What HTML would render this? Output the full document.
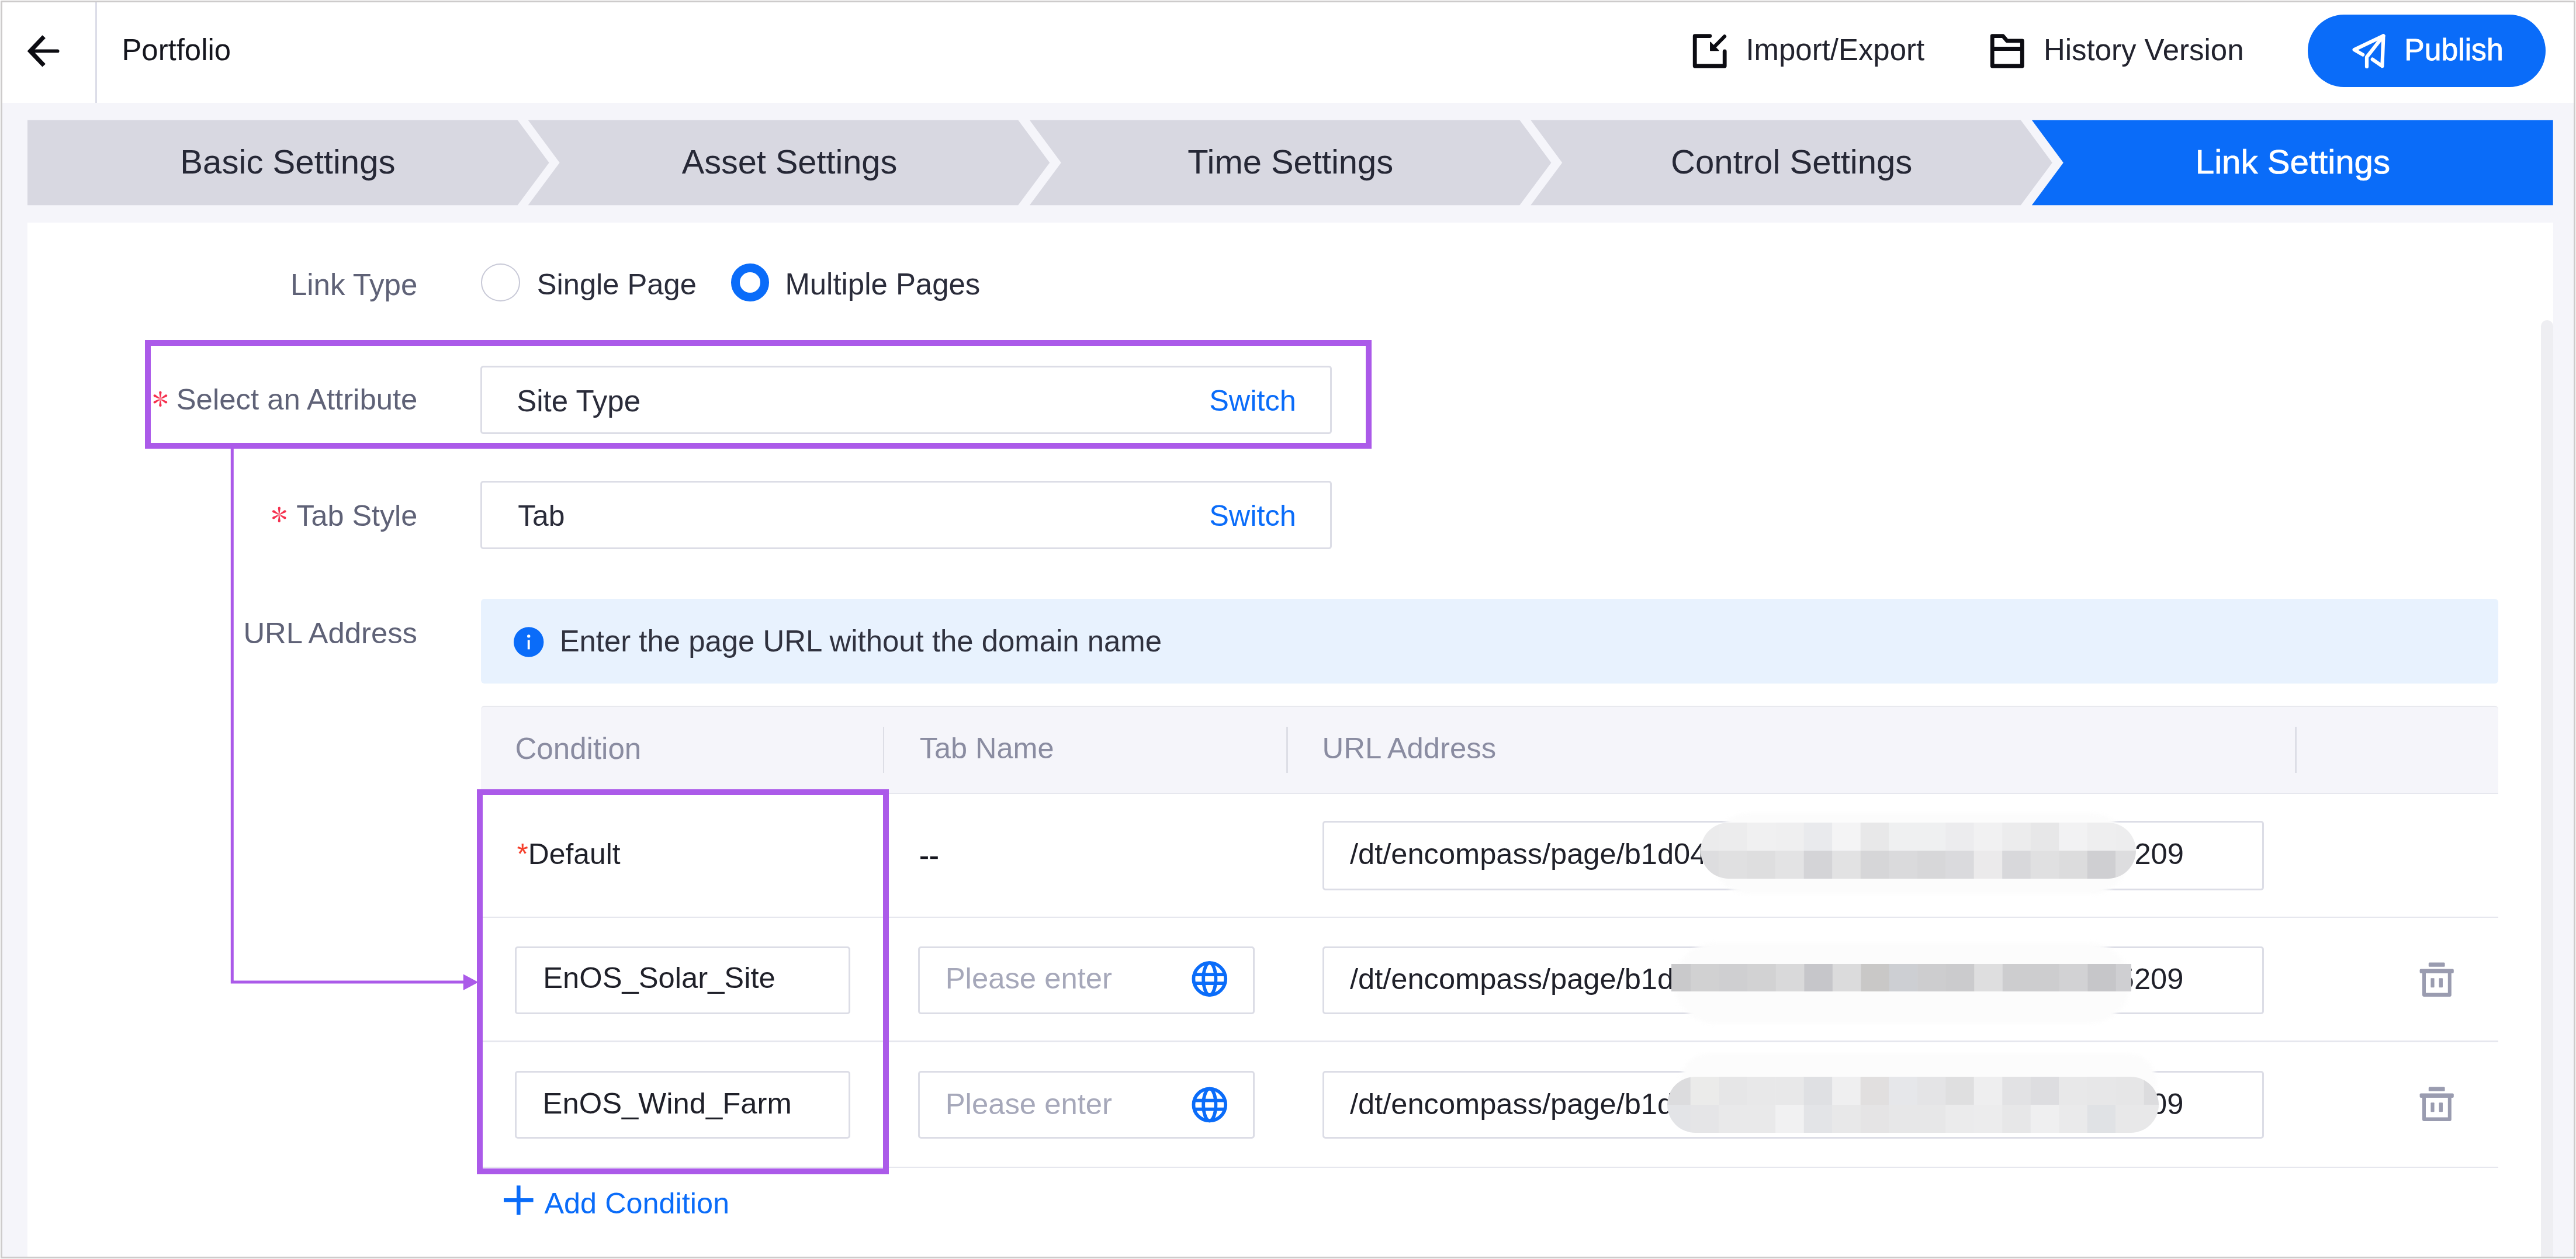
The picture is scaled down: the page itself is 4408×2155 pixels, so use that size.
<!DOCTYPE html>
<html><head><meta charset="utf-8"><title>Link Settings</title>
<style>
html,body{margin:0;padding:0;background:#fff;}
body{width:4408px;height:2155px;position:relative;overflow:hidden;font-family:"Liberation Sans",sans-serif;}
.t{position:absolute;white-space:nowrap;line-height:1;}
.b{position:absolute;box-sizing:border-box;}
.s{position:absolute;left:0;top:0;overflow:visible;pointer-events:none;}
</style></head><body>
<div class="b" style="left:4.00px;top:4.00px;width:4400.00px;height:2147.00px;background:#f5f5fa"></div>
<div class="b" style="left:4.00px;top:4.00px;width:4400.00px;height:172.40px;background:#fff"></div>
<div class="b" style="left:163.20px;top:4.00px;width:2.60px;height:172.40px;background:#dcdde8"></div>
<div class="b" style="left:47.00px;top:380.60px;width:4321.70px;height:1770.40px;background:#fff"></div>
<div class="b" style="left:4347.70px;top:548.00px;width:21.00px;height:1603.00px;background:#eeeef2;border-radius:10.5px 10.5px 0 0"></div>
<svg class="s" width="4408" height="2155" viewBox="0 0 4408 2155" ><g fill="none" stroke="#0c0c12" stroke-width="7.4"><path d="M75.2 62.8 L51.8 87.4 L75.2 112" stroke-linejoin="miter"/><path d="M51.8 87.4 H98.6" stroke-width="5.8" stroke-linecap="round"/></g></svg>
<div class="t" style="left:208.43px;top:60.93px;font-size:50.88px;color:#15161e;">Portfolio</div>
<svg class="s" width="4408" height="2155" viewBox="0 0 4408 2155" ><g fill="none" stroke="#0c0c12" stroke-width="6.8" stroke-linecap="round" stroke-linejoin="round"><path d="M2925.8 61.6 H2900.2 V113 H2951.2 V88"/><path d="M2951 62.4 L2934 79.6" stroke-width="6.2"/></g><path d="M2926.8 72.2 V86.6 H2940.8 Z" fill="#0c0c12" stroke="#0c0c12" stroke-width="1.5" stroke-linejoin="round"/></svg>
<div class="t" style="left:2987.42px;top:61.08px;font-size:50.94px;color:#22232e;">Import/Export</div>
<svg class="s" width="4408" height="2155" viewBox="0 0 4408 2155" ><g fill="none" stroke="#0c0c12" stroke-width="6.8" stroke-linejoin="round"><path d="M3409.2 61.6 H3427.4 L3434.4 69.9 H3460.3 V113 H3409.2 Z"/><path d="M3409.2 83.5 H3460.3"/></g></svg>
<div class="t" style="left:3496.92px;top:61.06px;font-size:50.96px;color:#22232e;">History Version</div>
<div class="b" style="left:3948.70px;top:25.20px;width:407.00px;height:123.70px;background:#0a6cf9;border-radius:62.1px"></div>
<svg class="s" width="4408" height="2155" viewBox="0 0 4408 2155" ><g fill="none" stroke="#fff" stroke-width="6.2" stroke-linecap="round" stroke-linejoin="round"><path d="M4043.2 93.6 L4028.6 85.1 L4078.4 61.4 L4076.4 113.2 L4059.8 101.6"/><path d="M4078.4 61.4 L4050 97.6 V114"/></g></svg>
<div class="t" style="left:4114.37px;top:60.31px;font-size:51.61px;color:#fff;-webkit-text-stroke:0.9px #fff;">Publish</div>
<svg class="s" width="4408" height="2155" viewBox="0 0 4408 2155" ><polygon points="47.0,205.6 885.6,205.6 939.6,278.4 885.6,351.3 47.0,351.3" fill="#d8d8e1"/><polygon points="903.6,205.6 1742.2,205.6 1796.2,278.4 1742.2,351.3 903.6,351.3 957.6,278.4" fill="#d8d8e1"/><polygon points="1761.8,205.6 2600.4,205.6 2654.4,278.4 2600.4,351.3 1761.8,351.3 1815.8,278.4" fill="#d8d8e1"/><polygon points="2619.2,205.6 3457.8,205.6 3511.8,278.4 3457.8,351.3 2619.2,351.3 2673.2,278.4" fill="#d8d8e1"/><polygon points="3476.8,205.6 4368.7,205.6 4368.7,351.3 3476.8,351.3 3530.8,278.4" fill="#0a6cf9"/></svg>
<div class="t" style="left:308.35px;top:248.41px;font-size:58.11px;color:#262836;">Basic Settings</div>
<div class="t" style="left:1166.70px;top:248.78px;font-size:57.67px;color:#262836;">Asset Settings</div>
<div class="t" style="left:2032.34px;top:248.58px;font-size:57.91px;color:#262836;">Time Settings</div>
<div class="t" style="left:2859.10px;top:248.43px;font-size:58.08px;color:#262836;">Control Settings</div>
<div class="t" style="left:3756.84px;top:248.34px;font-size:58.19px;color:#fff;-webkit-text-stroke:0.7px #fff;">Link Settings</div>
<div class="t" style="left:496.92px;top:462.01px;font-size:51.02px;color:#5f6277;">Link Type</div>
<div class="t" style="left:301.71px;top:658.96px;font-size:50.85px;color:#5f6277;">Select an Attribute</div>
<svg class="s" width="4408" height="2155" viewBox="0 0 4408 2155" ><g fill="#f5304e"><polygon points="275.30,679.90 276.50,671.70 272.30,671.70 273.50,679.90"/><circle cx="274.40" cy="671.70" r="2.1"/><polygon points="277.45,682.18 285.15,679.12 283.05,675.48 276.55,680.62"/><circle cx="284.10" cy="677.30" r="2.1"/><polygon points="276.55,685.18 283.05,690.32 285.15,686.68 277.45,683.62"/><circle cx="284.10" cy="688.50" r="2.1"/><polygon points="273.50,685.90 272.30,694.10 276.50,694.10 275.30,685.90"/><circle cx="274.40" cy="694.10" r="2.1"/><polygon points="271.35,683.62 263.65,686.68 265.75,690.32 272.25,685.18"/><circle cx="264.70" cy="688.50" r="2.1"/><polygon points="272.25,680.62 265.75,675.48 263.65,679.12 271.35,682.18"/><circle cx="264.70" cy="677.30" r="2.1"/></g><circle cx="274.4" cy="682.9" r="3.2" fill="#f8889a"/></svg>
<div class="t" style="left:507.29px;top:858.18px;font-size:50.34px;color:#5f6277;">Tab Style</div>
<svg class="s" width="4408" height="2155" viewBox="0 0 4408 2155" ><g fill="#f5304e"><polygon points="478.70,877.90 479.90,869.70 475.70,869.70 476.90,877.90"/><circle cx="477.80" cy="869.70" r="2.1"/><polygon points="480.85,880.18 488.55,877.12 486.45,873.48 479.95,878.62"/><circle cx="487.50" cy="875.30" r="2.1"/><polygon points="479.95,883.18 486.45,888.32 488.55,884.68 480.85,881.62"/><circle cx="487.50" cy="886.50" r="2.1"/><polygon points="476.90,883.90 475.70,892.10 479.90,892.10 478.70,883.90"/><circle cx="477.80" cy="892.10" r="2.1"/><polygon points="474.75,881.62 467.05,884.68 469.15,888.32 475.65,883.18"/><circle cx="468.10" cy="886.50" r="2.1"/><polygon points="475.65,878.62 469.15,873.48 467.05,877.12 474.75,880.18"/><circle cx="468.10" cy="875.30" r="2.1"/></g><circle cx="477.8" cy="880.9" r="3.2" fill="#f8889a"/></svg>
<div class="t" style="left:416.39px;top:1059.16px;font-size:50.85px;color:#5f6277;">URL Address</div>
<div class="b" style="left:822.50px;top:451.10px;width:67.50px;height:64.60px;border:2.8px solid #c8c9d7;border-radius:50%;background:#fff"></div>
<div class="t" style="left:918.72px;top:462.12px;font-size:50.65px;color:#2a2c3a;">Single Page</div>
<div class="b" style="left:1250.90px;top:451.10px;width:64.70px;height:64.70px;border:15.7px solid #0a6cf9;border-radius:50%;background:#fff"></div>
<div class="t" style="left:1343.43px;top:461.91px;font-size:50.90px;color:#2a2c3a;">Multiple Pages</div>
<div class="b" style="left:822.40px;top:626.20px;width:1456.40px;height:117.30px;border:3.1px solid #dcdde6;border-radius:5px;background:#fff"></div>
<div class="t" style="left:884.20px;top:660.99px;font-size:51.05px;color:#2a2c3a;">Site Type</div>
<div class="t" style="left:2069.23px;top:660.90px;font-size:50.44px;color:#0a6cf9;">Switch</div>
<div class="b" style="left:822.40px;top:823.30px;width:1456.40px;height:116.80px;border:3.1px solid #dcdde6;border-radius:5px;background:#fff"></div>
<div class="t" style="left:886.20px;top:859.12px;font-size:49.83px;color:#2a2c3a;">Tab</div>
<div class="t" style="left:2069.23px;top:858.30px;font-size:50.44px;color:#0a6cf9;">Switch</div>
<div class="b" style="left:823.00px;top:1025.00px;width:3451.60px;height:145.20px;background:#e8f2fe;border-radius:6px"></div>
<svg class="s" width="4408" height="2155" viewBox="0 0 4408 2155" ><circle cx="904.7" cy="1099" r="25.7" fill="#0a6cf9"/><circle cx="904.7" cy="1088.9" r="2.7" fill="#fff"/><rect x="902.8" y="1095.6" width="3.8" height="15.8" fill="#fff"/></svg>
<div class="t" style="left:957.63px;top:1072.53px;font-size:50.88px;color:#30323f;">Enter the page URL without the domain name</div>
<div class="b" style="left:823.00px;top:1208.20px;width:3451.80px;height:148.80px;background:#f5f5fa;border-radius:6px 6px 0 0;border-top:2.8px solid #e8e9ee"></div>
<div class="b" style="left:823.00px;top:1356.80px;width:3451.80px;height:2.60px;background:#e6e7ee"></div>
<div class="b" style="left:823.00px;top:1568.80px;width:3451.80px;height:2.60px;background:#e6e7ee"></div>
<div class="b" style="left:823.00px;top:1781.20px;width:3451.80px;height:2.60px;background:#e6e7ee"></div>
<div class="b" style="left:823.00px;top:1996.80px;width:3451.80px;height:2.60px;background:#e6e7ee"></div>
<div class="b" style="left:1510.60px;top:1243.50px;width:2.60px;height:79.50px;background:#dddee6"></div>
<div class="b" style="left:2201.20px;top:1243.50px;width:2.60px;height:79.50px;background:#dddee6"></div>
<div class="b" style="left:3927.40px;top:1243.50px;width:2.60px;height:79.50px;background:#dddee6"></div>
<div class="t" style="left:881.45px;top:1255.75px;font-size:51.09px;color:#8a8ca1;">Condition</div>
<div class="t" style="left:1573.79px;top:1256.32px;font-size:50.42px;color:#8a8ca1;">Tab Name</div>
<div class="t" style="left:2262.49px;top:1255.96px;font-size:50.85px;color:#8a8ca1;">URL Address</div>
<div class="t" style="left:884.45px;top:1438.04px;font-size:49.80px;color:#1f2029;"><span style="color:#f5402c">*</span>Default</div>
<div class="t" style="left:1572.98px;top:1438.97px;font-size:50.60px;color:#15161e;-webkit-text-stroke:0.7px #15161e;">--</div>
<div class="b" style="left:2263.40px;top:1405.10px;width:1610.40px;height:118.80px;border:3.1px solid #dcdde6;border-radius:5px;background:#fff"></div>
<div class="b" style="left:2263.40px;top:1619.60px;width:1610.40px;height:116.00px;border:3.1px solid #dcdde6;border-radius:5px;background:#fff"></div>
<div class="b" style="left:881.00px;top:1619.60px;width:574.00px;height:116.00px;border:3.1px solid #dcdde6;border-radius:5px;background:#fff"></div>
<div class="t" style="left:929.24px;top:1649.26px;font-size:50.72px;color:#1f2029;">EnOS_Solar_Site</div>
<div class="b" style="left:1571.40px;top:1619.60px;width:575.60px;height:116.00px;border:3.1px solid #dcdde6;border-radius:5px;background:#fff"></div>
<div class="t" style="left:1617.73px;top:1650.38px;font-size:50.82px;color:#a6a8ba;">Please enter</div>
<svg class="s" width="4408" height="2155" viewBox="0 0 4408 2155" ><g fill="none" stroke="#0a6cf9" stroke-width="5.8"><circle cx="2069.8" cy="1675.6" r="27.4"/><ellipse cx="2069.8" cy="1675.6" rx="10.6" ry="27.4"/><path d="M2043.8000000000002 1668.1999999999998 H2095.8 M2043.8000000000002 1683.1999999999998 H2095.8"/></g></svg>
<svg class="s" width="4408" height="2155" viewBox="0 0 4408 2155" ><g fill="#9a9cb0" transform="translate(0 0.00)"><rect x="4155.8" y="1647.4" width="27.8" height="7.4" rx="1.5"/><rect x="4140.6" y="1658.6" width="58.2" height="7.4" rx="2"/><path fill-rule="evenodd" d="M4145 1662 H4194.8 V1703 Q4194.8 1706 4191.8 1706 H4148 Q4145 1706 4145 1703 Z M4151 1666 V1699.6 H4188.8 V1666 Z"/><rect x="4159.4" y="1674.2" width="6.2" height="16" rx="1"/><rect x="4173.6" y="1674.2" width="6.4" height="16" rx="1"/></g></svg>
<div class="b" style="left:2263.40px;top:1833.20px;width:1610.40px;height:115.90px;border:3.1px solid #dcdde6;border-radius:5px;background:#fff"></div>
<div class="b" style="left:881.00px;top:1833.20px;width:574.00px;height:115.90px;border:3.1px solid #dcdde6;border-radius:5px;background:#fff"></div>
<div class="t" style="left:928.54px;top:1863.79px;font-size:50.81px;color:#1f2029;">EnOS_Wind_Farm</div>
<div class="b" style="left:1571.40px;top:1833.20px;width:575.60px;height:115.90px;border:3.1px solid #dcdde6;border-radius:5px;background:#fff"></div>
<div class="t" style="left:1617.73px;top:1864.98px;font-size:50.82px;color:#a6a8ba;">Please enter</div>
<svg class="s" width="4408" height="2155" viewBox="0 0 4408 2155" ><g fill="none" stroke="#0a6cf9" stroke-width="5.8"><circle cx="2069.8" cy="1891.0" r="27.4"/><ellipse cx="2069.8" cy="1891.0" rx="10.6" ry="27.4"/><path d="M2043.8000000000002 1883.6 H2095.8 M2043.8000000000002 1898.6 H2095.8"/></g></svg>
<svg class="s" width="4408" height="2155" viewBox="0 0 4408 2155" ><g fill="#9a9cb0" transform="translate(0 213.00)"><rect x="4155.8" y="1647.4" width="27.8" height="7.4" rx="1.5"/><rect x="4140.6" y="1658.6" width="58.2" height="7.4" rx="2"/><path fill-rule="evenodd" d="M4145 1662 H4194.8 V1703 Q4194.8 1706 4191.8 1706 H4148 Q4145 1706 4145 1703 Z M4151 1666 V1699.6 H4188.8 V1666 Z"/><rect x="4159.4" y="1674.2" width="6.2" height="16" rx="1"/><rect x="4173.6" y="1674.2" width="6.4" height="16" rx="1"/></g></svg>
<div class="t" style="left:2310.00px;top:1437.37px;font-size:50.60px;color:#1f2029;">/dt/encompass/page/b1d04</div>
<div class="t" style="left:2310.00px;top:1650.77px;font-size:50.60px;color:#1f2029;">/dt/encompass/page/b1d</div>
<div class="t" style="left:2310.00px;top:1865.37px;font-size:50.60px;color:#1f2029;">/dt/encompass/page/b1d</div>
<div class="t" style="left:3652.41px;top:1437.37px;font-size:50.60px;color:#1f2029;">209</div>
<div class="t" style="left:3623.77px;top:1650.77px;font-size:50.60px;color:#1f2029;">5209</div>
<div class="t" style="left:3651.91px;top:1865.37px;font-size:50.60px;color:#1f2029;">209</div>
<div class="b" style="left:2932.00px;top:1392.00px;width:708.00px;height:138.00px;background:#fcfcfc;border-radius:60px;filter:blur(3px)"></div>
<svg class="b" style="left:2909.8px;top:1407.6px;border-radius:48px;overflow:hidden;" width="745.2" height="96.2"><rect x="0.0" y="0.0" width="31.8" height="48.7" fill="#ebebec"/><rect x="31.2" y="0.0" width="49.1" height="48.7" fill="#ececed"/><rect x="79.7" y="0.0" width="49.1" height="48.7" fill="#f0f0f1"/><rect x="128.2" y="0.0" width="49.1" height="48.7" fill="#efeff0"/><rect x="176.7" y="0.0" width="49.1" height="48.7" fill="#e9eaed"/><rect x="225.2" y="0.0" width="49.1" height="48.7" fill="#f4f4f5"/><rect x="273.7" y="0.0" width="49.1" height="48.7" fill="#e8e8e9"/><rect x="322.2" y="0.0" width="49.1" height="48.7" fill="#eff0f1"/><rect x="370.7" y="0.0" width="49.1" height="48.7" fill="#eff0f1"/><rect x="419.2" y="0.0" width="49.1" height="48.7" fill="#ececee"/><rect x="467.7" y="0.0" width="49.1" height="48.7" fill="#f1f1f2"/><rect x="516.2" y="0.0" width="49.1" height="48.7" fill="#ececed"/><rect x="564.7" y="0.0" width="49.1" height="48.7" fill="#e7e7e8"/><rect x="613.2" y="0.0" width="49.1" height="48.7" fill="#f2f2f3"/><rect x="661.7" y="0.0" width="49.1" height="48.7" fill="#eeeeef"/><rect x="710.2" y="0.0" width="35.6" height="48.7" fill="#ededee"/><rect x="0.0" y="48.1" width="31.8" height="48.7" fill="#dddddf"/><rect x="31.2" y="48.1" width="49.1" height="48.7" fill="#e0e0e1"/><rect x="79.7" y="48.1" width="49.1" height="48.7" fill="#dededf"/><rect x="128.2" y="48.1" width="49.1" height="48.7" fill="#e3e3e4"/><rect x="176.7" y="48.1" width="49.1" height="48.7" fill="#d4d4d7"/><rect x="225.2" y="48.1" width="49.1" height="48.7" fill="#e2e2e3"/><rect x="273.7" y="48.1" width="49.1" height="48.7" fill="#d6d6d8"/><rect x="322.2" y="48.1" width="49.1" height="48.7" fill="#dadadc"/><rect x="370.7" y="48.1" width="49.1" height="48.7" fill="#d7d7d9"/><rect x="419.2" y="48.1" width="49.1" height="48.7" fill="#dadadd"/><rect x="467.7" y="48.1" width="49.1" height="48.7" fill="#ebeaeb"/><rect x="516.2" y="48.1" width="49.1" height="48.7" fill="#d8d8db"/><rect x="564.7" y="48.1" width="49.1" height="48.7" fill="#e0e0e1"/><rect x="613.2" y="48.1" width="49.1" height="48.7" fill="#dcdcdd"/><rect x="661.7" y="48.1" width="49.1" height="48.7" fill="#cfcfd2"/><rect x="710.2" y="48.1" width="35.6" height="48.7" fill="#dddddf"/></svg>
<div class="b" style="left:2866.00px;top:1614.00px;width:778.00px;height:138.00px;background:#fcfcfc;border-radius:68px;filter:blur(3px)"></div>
<svg class="b" style="left:2859.8px;top:1650.4px;border-radius:0;overflow:hidden;" width="787.0" height="47.0"><rect x="0.0" y="0.0" width="33.9" height="47.6" fill="#c9c9cb"/><rect x="33.3" y="0.0" width="49.1" height="47.6" fill="#d1d1d2"/><rect x="81.8" y="0.0" width="49.1" height="47.6" fill="#cfcfd1"/><rect x="130.3" y="0.0" width="49.1" height="47.6" fill="#d2d2d3"/><rect x="178.8" y="0.0" width="49.1" height="47.6" fill="#d9d9da"/><rect x="227.3" y="0.0" width="49.1" height="47.6" fill="#c6c6ca"/><rect x="275.8" y="0.0" width="49.1" height="47.6" fill="#dbdbdc"/><rect x="324.3" y="0.0" width="49.1" height="47.6" fill="#c9c8c7"/><rect x="372.8" y="0.0" width="49.1" height="47.6" fill="#cdcfd3"/><rect x="421.3" y="0.0" width="49.1" height="47.6" fill="#cdcdcf"/><rect x="469.8" y="0.0" width="49.1" height="47.6" fill="#cbcbcd"/><rect x="518.3" y="0.0" width="49.1" height="47.6" fill="#dededf"/><rect x="566.8" y="0.0" width="49.1" height="47.6" fill="#cdcdcf"/><rect x="615.3" y="0.0" width="49.1" height="47.6" fill="#cdcdcf"/><rect x="663.8" y="0.0" width="49.1" height="47.6" fill="#d2d2d4"/><rect x="712.3" y="0.0" width="49.1" height="47.6" fill="#c6c6c9"/><rect x="760.8" y="0.0" width="26.8" height="47.6" fill="#cfcfd2"/></svg>
<div class="b" style="left:2876.00px;top:1803.00px;width:814.00px;height:97.00px;background:#fcfcfc;border-radius:48px;filter:blur(3px)"></div>
<svg class="b" style="left:2853.4px;top:1843.4px;border-radius:48px;overflow:hidden;" width="840.4" height="96.0"><rect x="0.0" y="0.0" width="40.3" height="48.6" fill="#dcdcde"/><rect x="39.7" y="0.0" width="49.1" height="48.6" fill="#ebebea"/><rect x="88.2" y="0.0" width="49.1" height="48.6" fill="#e6e6e7"/><rect x="136.7" y="0.0" width="49.1" height="48.6" fill="#e8e8e9"/><rect x="185.2" y="0.0" width="49.1" height="48.6" fill="#e8e8e9"/><rect x="233.7" y="0.0" width="49.1" height="48.6" fill="#dfe0e3"/><rect x="282.2" y="0.0" width="49.1" height="48.6" fill="#efeff0"/><rect x="330.7" y="0.0" width="49.1" height="48.6" fill="#e1dfdf"/><rect x="379.2" y="0.0" width="49.1" height="48.6" fill="#e6e7ea"/><rect x="427.7" y="0.0" width="49.1" height="48.6" fill="#e4e4e6"/><rect x="476.2" y="0.0" width="49.1" height="48.6" fill="#dfdfe0"/><rect x="524.7" y="0.0" width="49.1" height="48.6" fill="#eeeeef"/><rect x="573.2" y="0.0" width="49.1" height="48.6" fill="#e2e2e4"/><rect x="621.7" y="0.0" width="49.1" height="48.6" fill="#dddde0"/><rect x="670.2" y="0.0" width="49.1" height="48.6" fill="#e8e8e9"/><rect x="718.7" y="0.0" width="49.1" height="48.6" fill="#e7e7e8"/><rect x="767.2" y="0.0" width="49.1" height="48.6" fill="#e6e6e7"/><rect x="815.7" y="0.0" width="25.3" height="48.6" fill="#dcdcde"/><rect x="0.0" y="48.0" width="40.3" height="48.6" fill="#e3e4e7"/><rect x="39.7" y="48.0" width="49.1" height="48.6" fill="#e5e5e7"/><rect x="88.2" y="48.0" width="49.1" height="48.6" fill="#e9e9ea"/><rect x="136.7" y="48.0" width="49.1" height="48.6" fill="#e9e9ea"/><rect x="185.2" y="48.0" width="49.1" height="48.6" fill="#f1f1f2"/><rect x="233.7" y="48.0" width="49.1" height="48.6" fill="#e3e4e7"/><rect x="282.2" y="48.0" width="49.1" height="48.6" fill="#e8e8e9"/><rect x="330.7" y="48.0" width="49.1" height="48.6" fill="#e5e4e5"/><rect x="379.2" y="48.0" width="49.1" height="48.6" fill="#e7e7e8"/><rect x="427.7" y="48.0" width="49.1" height="48.6" fill="#e7e7e8"/><rect x="476.2" y="48.0" width="49.1" height="48.6" fill="#ebebec"/><rect x="524.7" y="48.0" width="49.1" height="48.6" fill="#ececed"/><rect x="573.2" y="48.0" width="49.1" height="48.6" fill="#e7e7e8"/><rect x="621.7" y="48.0" width="49.1" height="48.6" fill="#efeff0"/><rect x="670.2" y="48.0" width="49.1" height="48.6" fill="#eaeaeb"/><rect x="718.7" y="48.0" width="49.1" height="48.6" fill="#e0e2e5"/><rect x="767.2" y="48.0" width="49.1" height="48.6" fill="#e8e8e9"/><rect x="815.7" y="48.0" width="25.3" height="48.6" fill="#e8e8e9"/></svg>
<svg class="s" width="4408" height="2155" viewBox="0 0 4408 2155" ><path d="M887.3 2029.2 V2079.4 M862 2054.3 H912.6" stroke="#0a6cf9" stroke-width="6.6" fill="none"/></svg>
<div class="t" style="left:931.50px;top:2034.74px;font-size:50.39px;color:#0a6cf9;">Add Condition</div>
<div class="b" style="left:248.00px;top:582.10px;width:2099.10px;height:185.90px;border:10px solid #ab5ae9"></div>
<div class="b" style="left:816.00px;top:1351.30px;width:704.80px;height:659.10px;border:10px solid #ab5ae9"></div>
<svg class="s" width="4408" height="2155" viewBox="0 0 4408 2155" ><path d="M397.3 767 V1681 H795" fill="none" stroke="#ab5ae9" stroke-width="5"/><path d="M792.8 1667.6 L818.6 1681.2 L792.8 1695 Z" fill="#ab5ae9"/></svg>
<div class="b" style="left:1px;top:1px;width:4406px;height:2153px;border:3px solid #cdcbcb;box-sizing:border-box"></div>
</body></html>
